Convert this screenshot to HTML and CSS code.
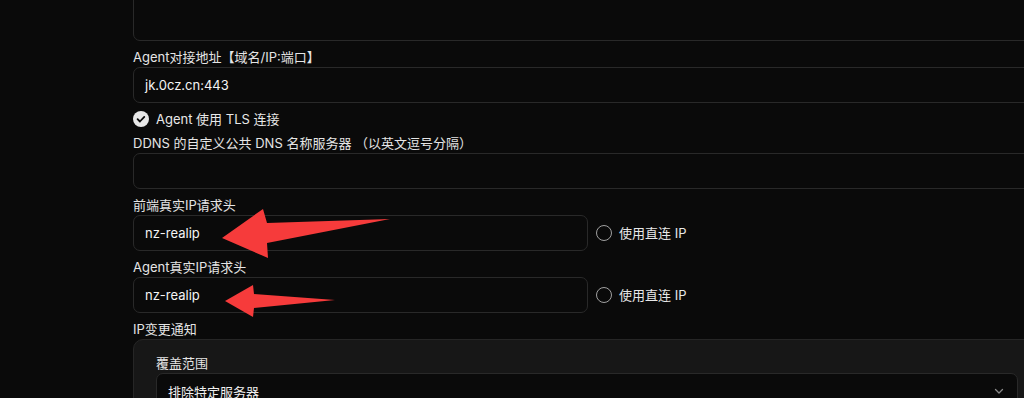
FILE: index.html
```html
<!DOCTYPE html>
<html lang="zh-CN">
<head>
  <meta charset="UTF-8" />
  <meta name="viewport" content="width=device-width, initial-scale=1.0"/>
  <title>设置</title>
  <link rel="stylesheet" href="styles.css">
</head>
<body>

<div class="form">
  <div class="textarea"></div>

  <div class="field">
    <div class="label">Agent对接地址【域名/IP:端口】</div>
    <div class="input">jk.0cz.cn:443</div>
  </div>

  <div class="check-row">
    <span class="check on">
      <svg width="16" height="16" viewBox="0 0 16 16"><path d="M4.6 8.2l2.3 2.3 4.4-4.6" fill="none" stroke="#0a0a0a" stroke-width="1.8" stroke-linecap="round" stroke-linejoin="round"/></svg>
    </span>
    <span>Agent 使用 TLS 连接</span>
  </div>

  <div class="field">
    <div class="label">DDNS 的自定义公共 DNS 名称服务器 （以英文逗号分隔）</div>
    <div class="input"></div>
  </div>

  <div class="field">
    <div class="label">前端真实IP请求头</div>
    <div class="input-row">
      <div class="input short">nz-realip</div>
      <div class="check-row">
        <span class="check"></span>
        <span>使用直连 IP</span>
      </div>
    </div>
  </div>

  <div class="field">
    <div class="label">Agent真实IP请求头</div>
    <div class="input-row">
      <div class="input short">nz-realip</div>
      <div class="check-row">
        <span class="check"></span>
        <span>使用直连 IP</span>
      </div>
    </div>
  </div>

  <div class="field">
    <div class="label">IP变更通知</div>
    <div class="card">
      <div class="label">覆盖范围</div>
      <div class="select">
        <span>排除特定服务器</span>
        <svg width="12" height="12" viewBox="0 0 12 12"><path d="M2.5 4.5L6 8l3.5-3.5" fill="none" stroke="#8a8a8a" stroke-width="1.3" stroke-linecap="round" stroke-linejoin="round"/></svg>
      </div>
    </div>
  </div>
</div>

<!-- 标注箭头 -->
<svg class="marks" width="1024" height="398" viewBox="0 0 1024 398">
  <polygon points="222,238 263,209 267,223 390,219 267,243 268,258" fill="#f63b3b"/>
  <polygon points="225,301 253,285 254,294 335,300 254,308 253,317" fill="#f63b3b"/>
</svg>

</body>
</html>
```

FILE: styles.css
```css
* {
  margin: 0;
  padding: 0;
  box-sizing: border-box;
}

html, body {
  height: 100%;
  overflow: hidden;
  background: #0a0a0a;
  color: #e8e8e8;
  font-family: 'Inter', 'Noto Sans CJK SC', sans-serif;
  font-size: 13px;
}

.form {
  width: 908px;
  margin-left: 133px;
  margin-top: -40px;
  display: flex;
  flex-direction: column;
  gap: 8px;
}

.textarea {
  height: 81px;
  border: 1px solid #292929;
  border-radius: 7px;
}

.field {
  display: flex;
  flex-direction: column;
  gap: 2px;
}

.label {
  line-height: 16px;
  height: 16px;
  color: #e5e5e5;
  white-space: nowrap;
}

.input {
  height: 36px;
  border: 1px solid #292929;
  border-radius: 7px;
  padding: 0 11px;
  display: flex;
  align-items: center;
  color: #f5f5f5;
}

.input-row {
  display: flex;
  align-items: center;
  gap: 8px;
}

.input.short {
  width: 455px;
}

.check-row {
  display: flex;
  align-items: center;
  gap: 7px;
  height: 16px;
  line-height: 16px;
  color: #e8e8e8;
}

.check {
  width: 16px;
  height: 16px;
  border-radius: 50%;
  border: 1.5px solid #a0a0a0;
  display: flex;
  flex: none;
}

.check.on {
  border: none;
  background: #e8e8e8;
}

.card {
  background: #171717;
  border: 1px solid #262626;
  border-radius: 10px;
  padding: 15px 22px;
  display: flex;
  flex-direction: column;
  gap: 2px;
}

.select {
  height: 36px;
  background: #0a0a0a;
  border: 1px solid #292929;
  border-radius: 7px;
  padding: 0 12px 0 11px;
  display: flex;
  align-items: center;
  justify-content: space-between;
  color: #f0f0f0;
}

/* 箭头标注 */
.marks {
  position: absolute;
  top: 0;
  left: 0;
  pointer-events: none;
}
```
